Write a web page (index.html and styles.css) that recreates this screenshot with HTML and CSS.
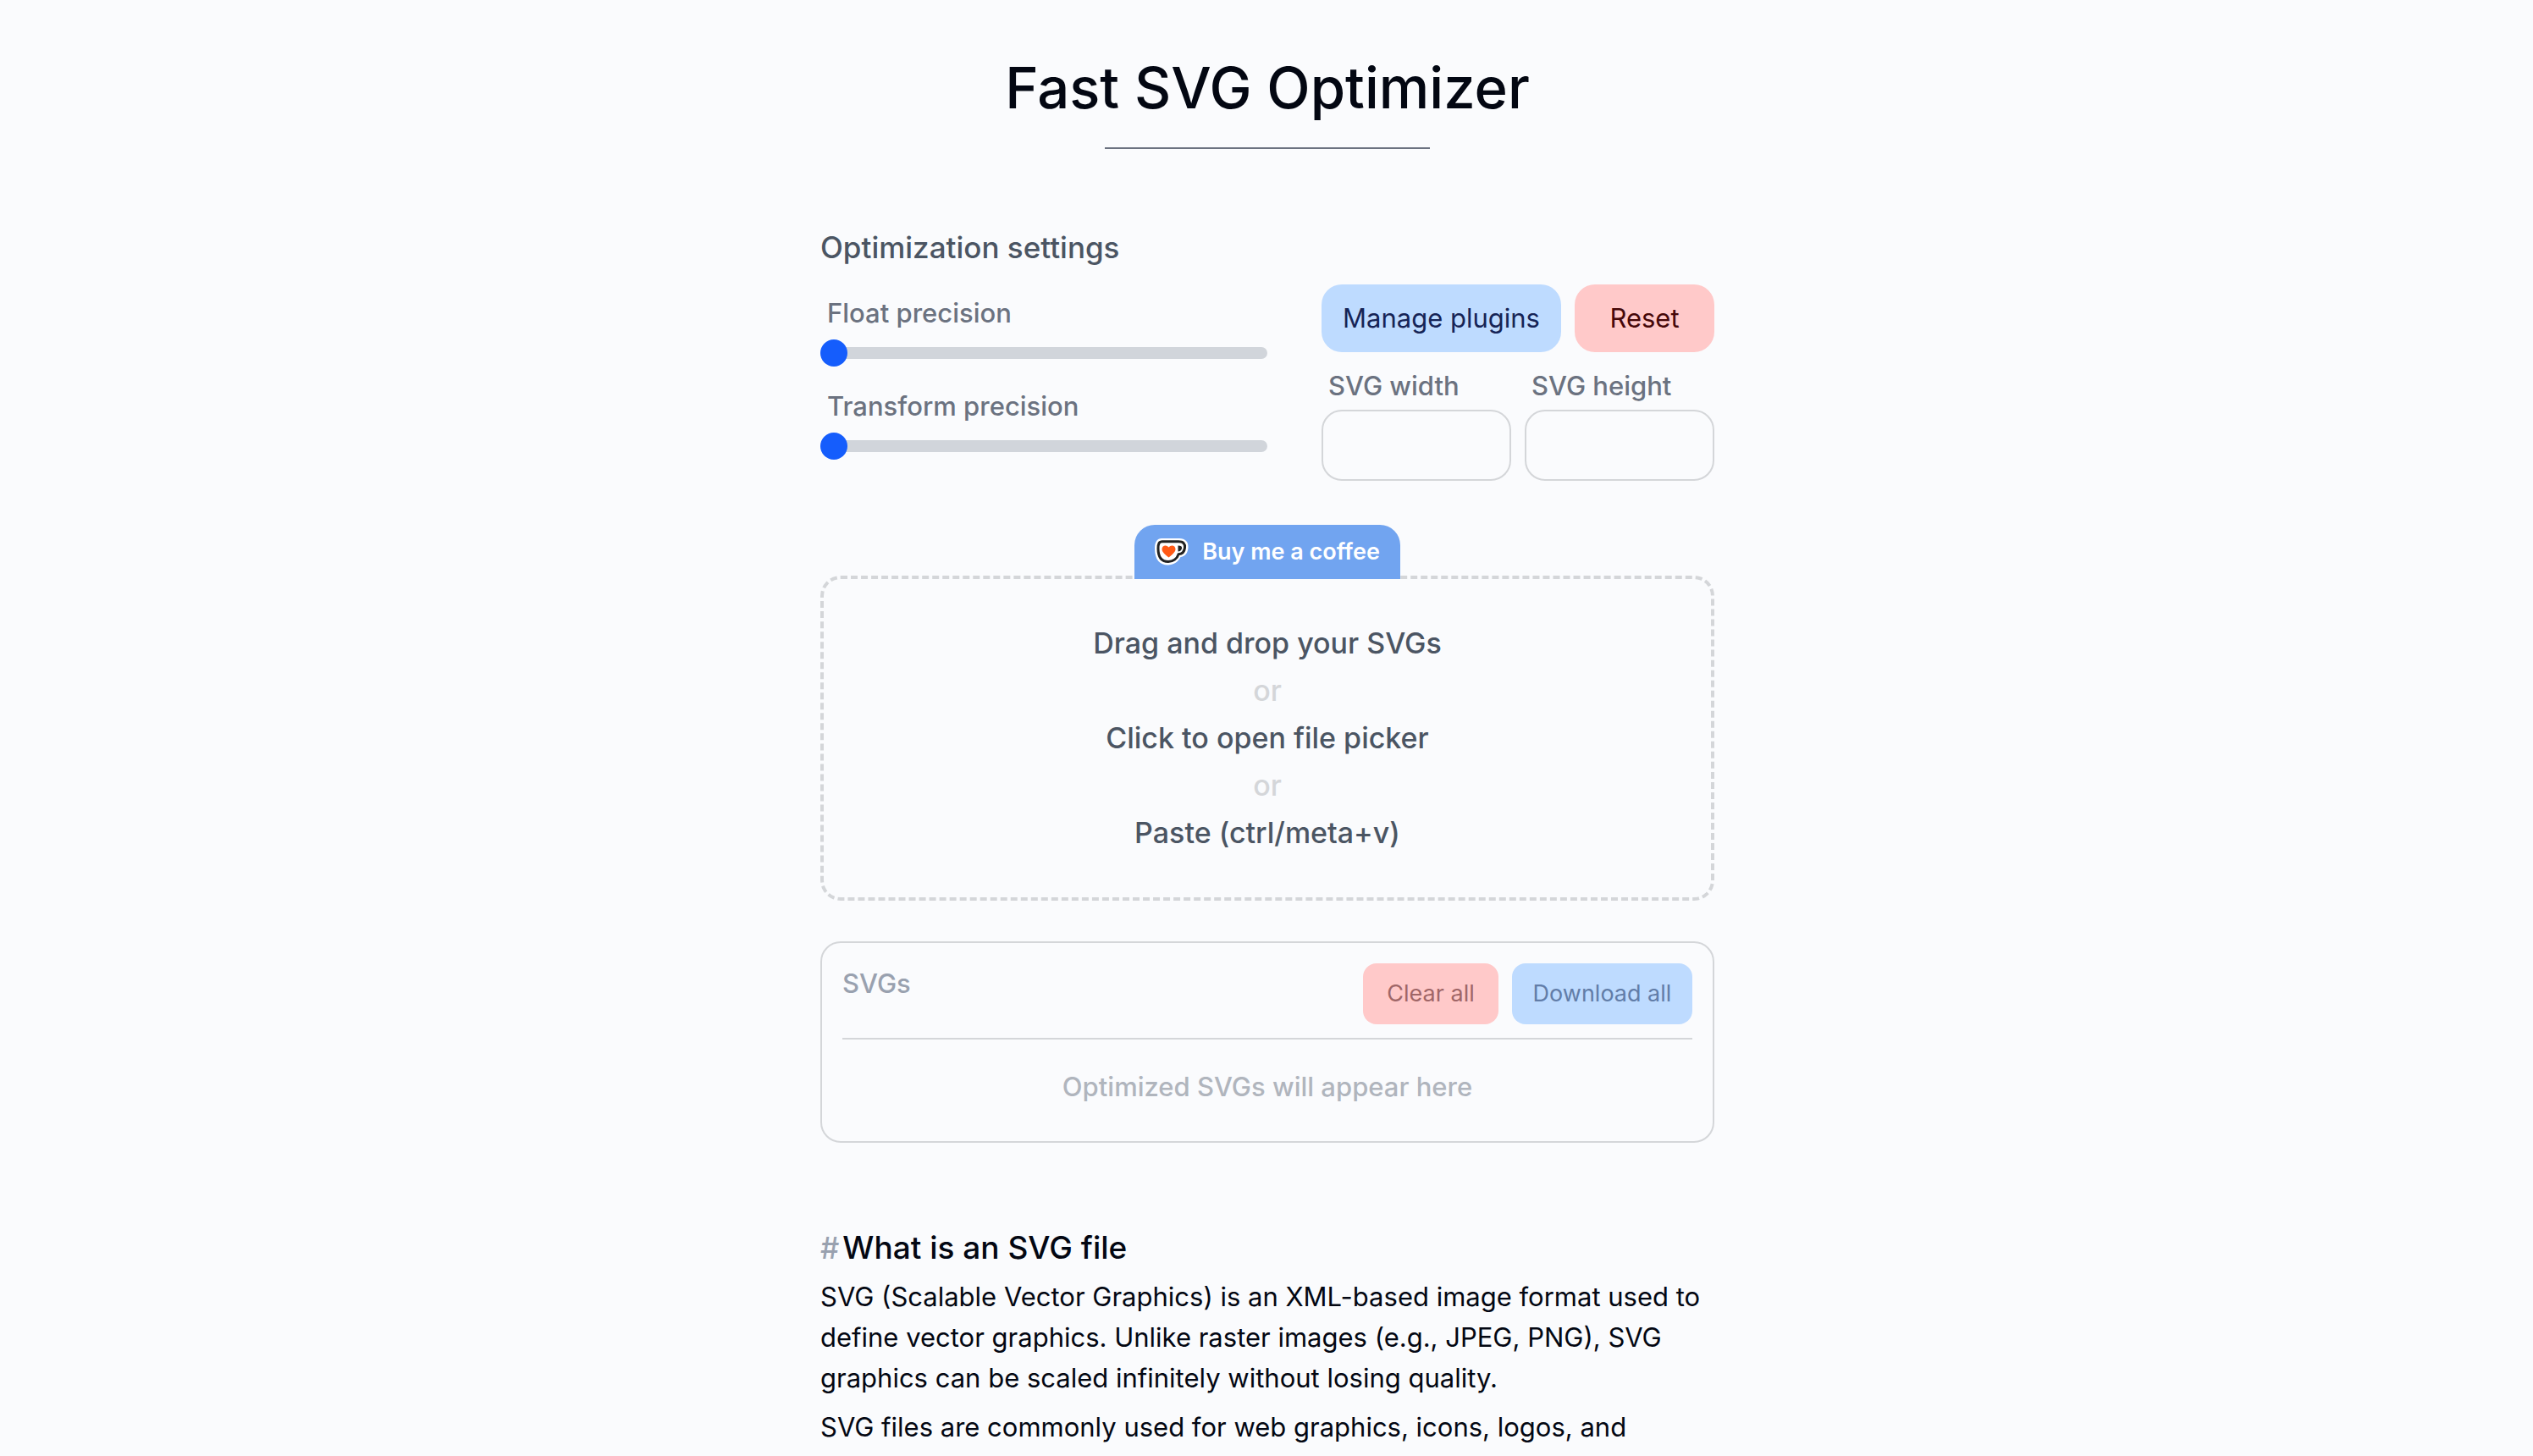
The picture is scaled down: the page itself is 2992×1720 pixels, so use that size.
FILE: index.html
```html
<!DOCTYPE html>
<html lang="en">
<head>
<meta charset="utf-8">
<meta name="viewport" content="width=device-width, initial-scale=1">
<title>Fast SVG Optimizer</title>
<link rel="stylesheet" href="styles.css">
</head>
<body>
<main class="page">
  <header class="masthead">
    <h1 class="title">Fast SVG Optimizer</h1>
    <hr class="title-rule">
  </header>

  <section class="settings">
    <h2 class="section-title">Optimization settings</h2>
    <div class="settings-grid">
      <div class="sliders">
        <div class="field">
          <label class="label" for="float-precision">Float precision</label>
          <input class="slider" id="float-precision" type="range" min="0" max="8" value="0">
        </div>
        <div class="field">
          <label class="label" for="transform-precision">Transform precision</label>
          <input class="slider" id="transform-precision" type="range" min="0" max="8" value="0">
        </div>
      </div>
      <div class="options">
        <div class="actions">
          <button class="button button-blue" type="button">Manage plugins</button>
          <button class="button button-red" type="button">Reset</button>
        </div>
        <div class="sizes">
          <div class="field">
            <label class="label" for="svg-width">SVG width</label>
            <input class="size-input" id="svg-width" type="text">
          </div>
          <div class="field">
            <label class="label" for="svg-height">SVG height</label>
            <input class="size-input" id="svg-height" type="text">
          </div>
        </div>
      </div>
    </div>
  </section>

  <section class="upload">
    <a class="coffee" href="#coffee">
      <svg class="coffee-icon" viewBox="0 0 40 32" aria-hidden="true">
        <path d="M8 0H29C36 0 40 4 39.500 11C39 18 35 21.500 30.500 22C27.500 28 22 31.500 15.500 31.500C6 31.500 0 25 0 12C0 4 3 0 8 0Z" fill="#fff"/>
        <path d="M9 3.800H28C34 3.800 36 6.500 35.500 11C35 16 32 18.500 28 18.800C26.500 24 21.500 27.500 16 27.500C8 27.500 4 22 4 12C4 6.500 5 3.800 9 3.800Z" fill="#fff" stroke="#222" stroke-width="3"/>
        <path d="M27.500 8.500C31 8.500 32.500 9.500 32 12C31.500 14 30 15.300 27.500 15.500Z" fill="#222"/>
        <path d="M16.500 22.500C12 19 8.500 16 8.500 12.800C8.500 8 14 7 16.500 10.500C19 7 24.500 8 24.500 12.800C24.500 16 21 19 16.500 22.500Z" fill="#ff5a16"/>
      </svg>
      <span>Buy me a coffee</span>
    </a>
    <button class="dropzone" type="button">
      <span>Drag and drop your SVGs</span>
      <span class="or">or</span>
      <span>Click to open file picker</span>
      <span class="or">or</span>
      <span>Paste (ctrl/meta+v)</span>
    </button>
  </section>

  <section class="results">
    <div class="results-head">
      <h2 class="results-title">SVGs</h2>
      <div class="results-actions">
        <button class="button button-small button-red" type="button" disabled>Clear all</button>
        <button class="button button-small button-blue" type="button" disabled>Download all</button>
      </div>
    </div>
    <p class="empty">Optimized SVGs will appear here</p>
  </section>

  <article class="article">
    <h2 class="article-title" id="what-is-svg"><a class="anchor" href="#what-is-svg">#</a>What is an SVG file</h2>
    <p>SVG (Scalable Vector Graphics) is an XML-based image format used to define vector graphics. Unlike raster images (e.g., JPEG, PNG), SVG graphics can be scaled infinitely without losing quality.</p>
    <p>SVG files are commonly used for web graphics, icons, logos, and illustrations.</p>
  </article>
</main>
</body>
</html>
```

FILE: styles.css
```css
*,
*::before,
*::after {
  box-sizing: border-box;
}

html {
  overflow: hidden;
}

body,
h1,
h2,
p {
  margin: 0;
}

body {
  background: #fafbfd;
  color: #030712;
  font-family: Inter, "Liberation Sans", sans-serif;
  font-size: 31px;
  line-height: 48px;
}

button,
input {
  font: inherit;
  color: inherit;
}

h1,
h2 {
  font-weight: 500;
}

.page {
  max-width: 1120px;
  margin: 0 auto;
  padding: 64px 31px 0 33px;
}

.masthead {
  display: flex;
  flex-direction: column;
  align-items: center;
  gap: 30px;
}

.title {
  font-size: 67px;
  line-height: 80px;
}

.title-rule {
  width: 384px;
  height: 2px;
  margin: 0;
  border: 0;
  background: #6b7280;
}

.settings {
  margin-top: 88px;
}

.section-title {
  color: #4b5563;
  font-size: 35px;
  line-height: 56px;
}

.settings-grid {
  display: grid;
  grid-template-columns: 528fr 464fr;
  gap: 64px;
  margin-top: 16px;
}

.sliders,
.options,
.field {
  display: flex;
  flex-direction: column;
}

.sliders {
  gap: 23px;
  padding-top: 10px;
}

.sliders .field {
  gap: 7px;
}

.label {
  padding: 0 8px;
  color: #6b7280;
  font-weight: 500;
}

.slider {
  -webkit-appearance: none;
  appearance: none;
  width: 100%;
  height: 14px;
  margin: 9px 0;
  border-radius: 8px;
  background: #d1d5db;
}

.slider::-webkit-slider-thumb {
  -webkit-appearance: none;
  width: 32px;
  height: 32px;
  border-radius: 50%;
  background: #155dfc;
}

.options {
  gap: 16px;
}

.actions {
  display: grid;
  grid-template-columns: 283fr 165fr;
  gap: 16px;
}

.button {
  padding: 16px 0;
  border: 0;
  border-radius: 24px;
  text-align: center;
}

.button-blue {
  background: #bedbff;
  color: #162456;
}

.button-red {
  background: #ffc9c9;
  color: #460809;
}

.sizes {
  display: grid;
  grid-template-columns: 1fr 1fr;
  gap: 16px;
}

.sizes .field {
  gap: 4px;
}

.size-input {
  width: 100%;
  height: 84px;
  padding: 0 24px;
  border: 2px solid #d4d6d9;
  border-radius: 24px;
  background: transparent;
}

.upload {
  display: flex;
  flex-direction: column;
  align-items: center;
  margin-top: 52px;
}

.coffee {
  z-index: 1;
  display: flex;
  align-items: center;
  gap: 16px;
  padding: 12px 24px;
  border-radius: 24px 24px 0 0;
  background: #71a4f0;
  color: #fff;
  font-size: 27px;
  font-weight: 600;
  line-height: 40px;
  text-decoration: none;
}

.coffee-icon {
  width: 40px;
  height: 32px;
}

.dropzone {
  display: flex;
  flex-direction: column;
  align-items: center;
  width: 100%;
  margin-top: -4px;
  padding: 48px 0;
  border: 4px dashed #d4d6d9;
  border-radius: 24px;
  background: transparent;
  color: #4b5563;
  font-size: 34px;
  font-weight: 500;
  line-height: 56px;
}

.or {
  color: #d4d6d9;
}

.results {
  margin-top: 48px;
  padding: 24px;
  border: 2px solid #d4d6d9;
  border-radius: 24px;
}

.results-head {
  display: flex;
  align-items: flex-start;
  justify-content: space-between;
  padding-bottom: 16px;
  border-bottom: 2px solid #d4d6d9;
}

.results-title {
  color: #99a1af;
  font-size: 31px;
  line-height: 48px;
}

.results-actions {
  display: grid;
  grid-template-columns: 160px 213px;
  gap: 16px;
}

.button-small {
  border-radius: 16px;
  font-size: 27px;
  line-height: 40px;
}

.button-small.button-blue {
  color: #627da8;
}

.button-small.button-red {
  color: #9f6667;
}

.empty {
  padding: 32px 0 16px;
  color: #b0b5bd;
  font-weight: 500;
  text-align: center;
}

.article {
  display: flex;
  flex-direction: column;
  gap: 10px;
  margin-top: 100px;
}

.article-title {
  display: flex;
  align-items: baseline;
  gap: 4px;
  height: 48px;
  font-size: 37px;
  line-height: 48px;
}

.anchor {
  color: #99a1af;
  font-size: 35px;
  text-decoration: none;
}
```
